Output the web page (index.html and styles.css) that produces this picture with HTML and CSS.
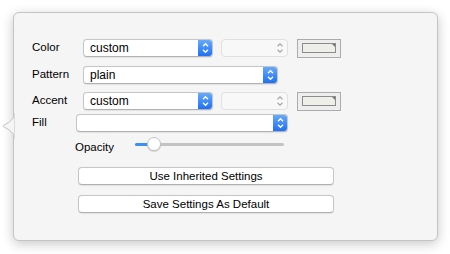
FILE: index.html
```html
<html>
<head>
  <link rel="stylesheet" href="styles.css">
</head>
<body>
<div class="popover">
  <svg class="arrow" width="13" height="26" viewBox="0 0 13 26">
    <path d="M12.5 0 C12.5 6 8 9 1.5 12.2 Q0.6 13 1.5 13.8 C8 17 12.5 20 12.5 26 Z" fill="#f5f5f5" stroke="#c4c4c4" stroke-width="1"/>
    <rect x="12.5" y="0" width="1" height="26" fill="#f5f5f5"/>
  </svg>

  <div class="row row1">
    <label class="lbl">Color</label>
    <div class="popup w130">
      <span class="val">custom</span>
      <span class="stepper">
        <svg width="15" height="18" viewBox="0 0 15 18"><path d="M5 7.3 L7.5 4.8 L10 7.3 M5 10.7 L7.5 13.2 L10 10.7" fill="none" stroke="#fff" stroke-width="1.4"/></svg>
      </span>
    </div>
    <div class="popup disabled w67">
      <span class="val"></span>
      <span class="stepper off">
        <svg width="15" height="18" viewBox="0 0 15 18"><path d="M4.5 7.3 L7 4.8 L9.5 7.3 M4.5 10.7 L7 13.2 L9.5 10.7" fill="none" stroke="#a8a8a8" stroke-width="1.3"/></svg>
      </span>
    </div>
    <div class="well"><div class="swatch"></div></div>
  </div>

  <div class="row row2">
    <label class="lbl">Pattern</label>
    <div class="popup w195">
      <span class="val">plain</span>
      <span class="stepper">
        <svg width="15" height="18" viewBox="0 0 15 18"><path d="M5 7.3 L7.5 4.8 L10 7.3 M5 10.7 L7.5 13.2 L10 10.7" fill="none" stroke="#fff" stroke-width="1.4"/></svg>
      </span>
    </div>
  </div>

  <div class="row row3">
    <label class="lbl">Accent</label>
    <div class="popup w130">
      <span class="val">custom</span>
      <span class="stepper">
        <svg width="15" height="18" viewBox="0 0 15 18"><path d="M5 7.3 L7.5 4.8 L10 7.3 M5 10.7 L7.5 13.2 L10 10.7" fill="none" stroke="#fff" stroke-width="1.4"/></svg>
      </span>
    </div>
    <div class="popup disabled w67">
      <span class="val"></span>
      <span class="stepper off">
        <svg width="15" height="18" viewBox="0 0 15 18"><path d="M4.5 7.3 L7 4.8 L9.5 7.3 M4.5 10.7 L7 13.2 L9.5 10.7" fill="none" stroke="#a8a8a8" stroke-width="1.3"/></svg>
      </span>
    </div>
    <div class="well"><div class="swatch"></div></div>
  </div>

  <div class="row row4">
    <label class="lbl short">Fill</label>
    <div class="popup w212">
      <span class="val"></span>
      <span class="stepper">
        <svg width="15" height="18" viewBox="0 0 15 18"><path d="M5 7.3 L7.5 4.8 L10 7.3 M5 10.7 L7.5 13.2 L10 10.7" fill="none" stroke="#fff" stroke-width="1.4"/></svg>
      </span>
    </div>
  </div>

  <div class="row row5">
    <label class="lbl opac">Opacity</label>
    <div class="slider">
      <div class="track"><div class="fill"></div></div>
      <div class="knob"></div>
    </div>
  </div>

  <div class="btns">
    <button class="btn">Use Inherited Settings</button>
    <button class="btn">Save Settings As Default</button>
  </div>
</div>
</body>
</html>
```

FILE: styles.css
```css
body{
  margin: 0;
  background: #fff;
  font-family: "Liberation Sans", Helvetica, Arial, sans-serif;
  font-size: 11.5px;
  color: #000;
}
.popover{
  position: relative;
  box-sizing: border-box;
  margin: 12px 0 0 13px;
  width: 425px;
  height: 229px;
  background: #f5f5f5;
  border: 1px solid #c4c4c4;
  border-radius: 6px;
  box-shadow: 0 3px 12px rgba(0,0,0,0.22);
  padding: 25px 0 0 18px;
}
.arrow{
  position: absolute;
  left: -12px;
  top: 100px;
}
.row{
  display: flex;
  align-items: center;
}
.row1{ height: 20px; }
.row2{ height: 18px; margin-top: 8px; }
.row3{ height: 20px; margin-top: 7px; }
.row4{ height: 18px; margin-top: 3px; }
.row5{ height: 14px; margin-top: 6px; }

.lbl{
  width: 51px;
  margin-top: -3px;
}
.lbl.short{ width: 44px; }
.lbl.opac{
  margin-left: 43px;
  width: 60px;
  margin-top: 3px;
}

.popup{
  box-sizing: border-box;
  height: 18px;
  display: flex;
  align-items: center;
  background: #fff;
  border: 1px solid #c6c6c6;
  border-bottom-color: #b2b2b2;
  border-radius: 4px;
  box-shadow: 0 0.5px 1px rgba(0,0,0,0.08);
  margin-right: 8px;
  overflow: hidden;
}
.w130{ width: 130px; }
.w67{ width: 67px; }
.w195{ width: 195px; }
.w212{ width: 212px; }
.val{
  flex: 1;
  padding-left: 6px;
  font-size: 12px;
}
.stepper{
  width: 15px;
  height: 18px;
  margin-right: -1px;
  background: linear-gradient(#69aefb, #1b6cf4);
  display: flex;
}
.popup.disabled{
  background: #f8f8f8;
  border-color: #e0e0e0;
  box-shadow: none;
}
.stepper.off{
  background: none;
}
.well{
  box-sizing: border-box;
  width: 44px;
  height: 19px;
  margin-left: 1px;
  border: 1px solid #ababab;
  background: #eeeeee;
  display: flex;
  align-items: center;
  justify-content: center;
}
.swatch{
  position: relative;
  box-sizing: border-box;
  width: 34px;
  height: 10px;
  border: 1px solid #8c8c8c;
  background: #efefe9;
}
.swatch::after{
  content: '';
  position: absolute;
  right: 0;
  top: 0;
  border-top: 3px solid #777;
  border-left: 3px solid transparent;
}
.slider{
  position: relative;
  width: 149px;
  height: 14px;
  margin-left: 0;
}
.track{
  position: absolute;
  left: 0;
  right: 0;
  top: 5px;
  height: 3px;
  border-radius: 2px;
  background: #c3c3c3;
}
.fill{
  width: 16px;
  height: 3px;
  border-radius: 2px;
  background: #3b8ff6;
}
.knob{
  position: absolute;
  left: 12px;
  top: -1px;
  box-sizing: border-box;
  width: 14px;
  height: 14px;
  border-radius: 50%;
  background: #fff;
  border: 1px solid #c2c2c2;
  box-shadow: 0 1px 1px rgba(0,0,0,0.15);
}
.btns{
  display: flex;
  flex-direction: column;
  gap: 10px;
  margin: 15px 0 0 46px;
}
.btn{
  box-sizing: border-box;
  width: 256px;
  height: 18px;
  padding: 0;
  font-family: "Liberation Sans", Helvetica, Arial, sans-serif;
  font-size: 11.5px;
  color: #000;
  background: #fff;
  border: 1px solid #c6c6c6;
  border-bottom-color: #b0b0b0;
  border-radius: 4px;
  box-shadow: 0 0.5px 1px rgba(0,0,0,0.08);
}
```
